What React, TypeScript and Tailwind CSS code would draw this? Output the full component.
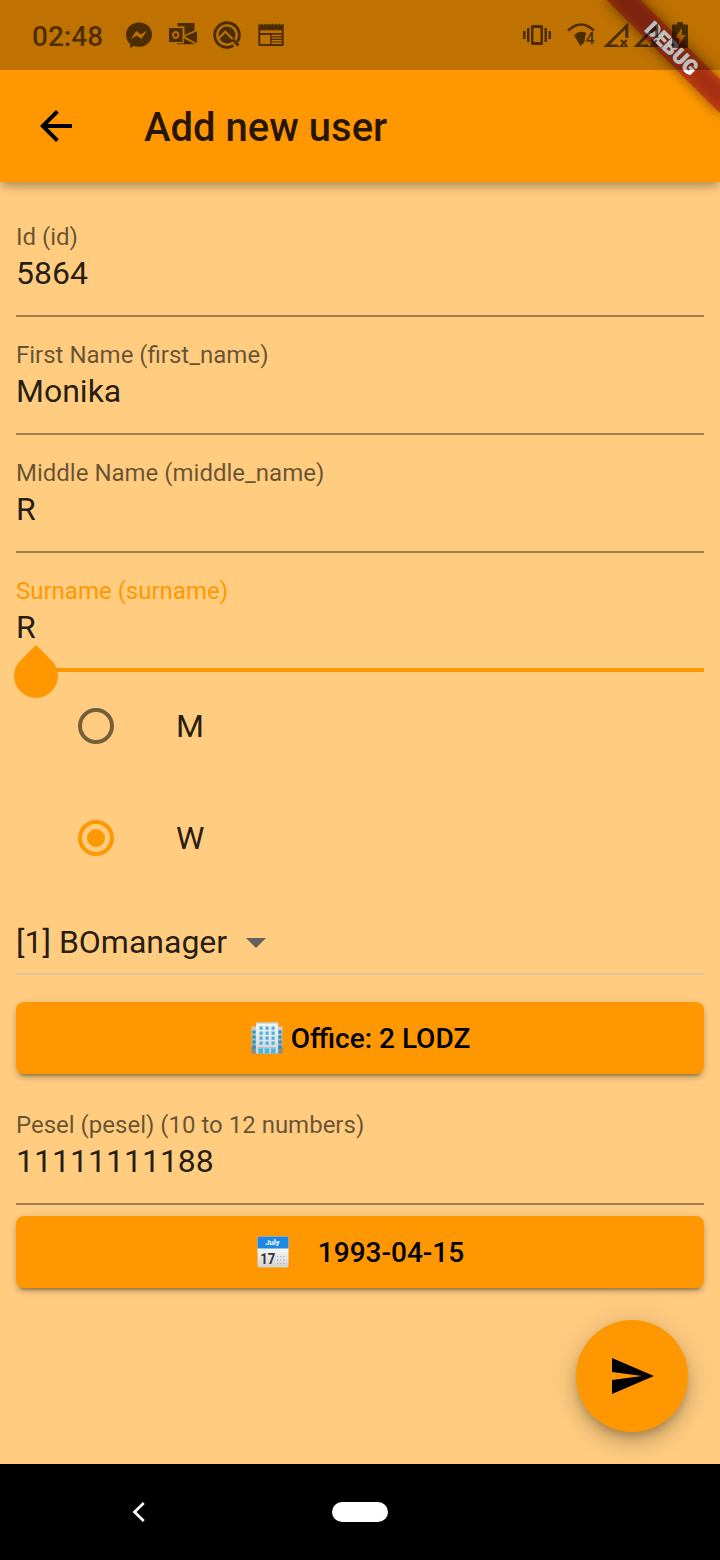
import React from "react";

const INK = "rgba(0,0,0,0.6)";

function StatusIcons() {
  return (
    <div className="flex items-center gap-4">
      <svg width="28" height="28" viewBox="0 0 28 28">
        <path
          fill={INK}
          fillRule="evenodd"
          d="M14 1.4C6.700 1.400 1 6.700 1 13.800c0 3.800 1.600 7 4.200 9.200v4l3.900-2c1.500.5 3.200.8 4.900.8 7.300 0 13-5.300 13-12.400S21.300 1.400 14 1.400zM5.800 18.200l5.500-8.300 4.500 3.600 6.200-3.900-5.600 8.300-4.500-3.500z"
        />
      </svg>
      <svg width="28" height="28" viewBox="0 0 28 28">
        <path
          fill={INK}
          fillRule="evenodd"
          d="M0 7h13.500v14H0zM6.700 10a3.700 4 0 1 0 .01 0zM6.700 12a1.800 2 0 1 1-.01 0z"
        />
        <path fill={INK} d="M8.500 2h17v7.500L15.500 14V5.300h-7zM15.500 15.500l12.500-5.300v12zM8 22.200h6.800v-4.900l10.700 5.500v.4H8z" />
      </svg>
      <svg width="28" height="28" viewBox="0 0 28 28">
        <defs>
          <mask id="peak" maskUnits="userSpaceOnUse" x="0" y="0" width="28" height="28">
            <rect width="28" height="28" fill="#fff" />
            <path d="M4.500 18.500L12.300 10.700L26 24.400" fill="none" stroke="#000" strokeWidth="2" />
          </mask>
        </defs>
        <g mask="url(#peak)">
          <circle cx="14" cy="14" r="8.500" fill={INK} />
        </g>
        <path
          fill="none"
          stroke={INK}
          strokeWidth="2.900"
          d="M24.300 20.800A12.300 12.300 0 1 0 20.500 24.500M19.500 18.500L25.500 24.500"
        />
      </svg>
      <svg width="28" height="28" viewBox="0 0 28 28" fill={INK}>
        <path
          fillRule="evenodd"
          d="M1.300 2.500l1.700 1.500 1.700-1.500L6.500 4l1.800-1.500L10 4l1.800-1.500L13.500 4l1.800-1.500L17 4l1.800-1.500L20.500 4l1.800-1.500L24 4l2.700-1.500V23.500q0 1.500-1.500 1.500H2.800q-1.500 0-1.500-1.500zM3.300 9.200V12h21.400V9.200zM3.300 14v9H13v-9z M14.500 13.800v1.400h10.200v-1.400zM14.500 16.400v1.400h10.200v-1.400zM14.500 19v1.400h10.200V19zM14.500 21.600V23h10.200v-1.400z"
        />
      </svg>
    </div>
  );
}

function Signal() {
  return (
    <svg width="26" height="26" viewBox="0 0 26 26">
      <path fill={INK} fillRule="evenodd" d="M25.300.5V16h-3V7.300L7 22.500h8V25H.3z" />
      <path stroke={INK} strokeWidth="2" d="M18 18l5.700 6M23.700 18L18 24" />
      <path fill={INK} d="M15 24h10v1H15z" />
    </svg>
  );
}

function StatusBar() {
  return (
    <div className="absolute inset-x-0 top-0 flex h-[70px] bg-black/25">
      <div className="ml-8 mt-[4px] flex h-[66px] w-[93px] items-center text-[28px] font-medium text-black/60">
        02:48
      </div>
      <div className="flex h-[70px] items-center">
        <StatusIcons />
      </div>
      <div className="ml-auto mr-[31px] flex h-[70px] items-center">
        <svg width="28" height="22" viewBox="0 0 28 22" fill={INK} className="mr-4">
          <path d="M0 7h2.500v8H0zM4 4h2.500v14H4zM21.500 4H24v14h-2.500zM25.500 7H28v8h-2.500z" />
          <path fillRule="evenodd" d="M9.500 1h9q1.500 0 1.500 1.500v17q0 1.500-1.500 1.500h-9Q8 21 8 19.500v-17Q8 1 9.500 1zM10.500 4v14h7V4z" />
        </svg>
        <svg width="28" height="26" viewBox="0 0 28 26" className="mr-2">
          <path fill="none" stroke={INK} strokeWidth="2.600" d="M1.200 8.500Q14-3.500 26.800 8.500" />
          <path fill={INK} d="M7 13.200Q12.500 7.800 19.500 11L17.800 15v4.500L13.500 24z" />
          <text x="18.500" y="21.500" fontSize="16" fontWeight="500" fill={INK}>
            4
          </text>
        </svg>
        <div className="mr-1">
          <Signal />
        </div>
        <div className="mr-[12px]">
          <Signal />
        </div>
        <svg width="18" height="28" viewBox="0 0 18 28">
          <path fill={INK} fillRule="evenodd" d="M6 1h6v2.500h4q1 0 1 1v21.500q0 1-1 1H2q-1 0-1-1V4.500q0-1 1-1h4zM10.800 7L4 17h3.800v7.500L14.500 14h-3.700z" />
        </svg>
      </div>
    </div>
  );
}

function DebugBanner() {
  return (
    <svg className="absolute right-0 top-0" width="160" height="160" viewBox="0 0 160 160">
      <defs>
        <filter id="banner-shadow" x="-20%" y="-100%" width="140%" height="300%">
          <feGaussianBlur stdDeviation="7" />
        </filter>
      </defs>
      <g transform="translate(160 0) rotate(45)">
        <rect x="-80" y="56" width="160" height="24" fill="#000" fillOpacity="0.5" filter="url(#banner-shadow)" />
        <rect x="-80" y="56" width="160" height="24" fill="#b71c1c" fillOpacity="0.63" />
        <text x="0" y="75.300" textAnchor="middle" fontSize="20.400" fontWeight="900" fill="#fff" stroke="#fff" strokeWidth="0.500">
          DEBUG
        </text>
      </g>
    </svg>
  );
}

type FieldProps = { label: string; value: string; focused?: boolean };

function Field({ label, value, focused = false }: FieldProps) {
  return (
    <div className="relative flex h-[118px] flex-col pt-6">
      <div className={focused ? "h-[28px] text-[24px] leading-[28px] text-[#ff9800]" : "h-[28px] text-[24px] leading-[28px] text-black/60"}>
        {label}
      </div>
      <div className="mt-[3px] h-[38px] text-[32px] leading-[38px] text-black/87">{value}</div>
      {focused ? (
        <>
          <div className="-mb-px mt-auto h-1 bg-[#ff9800]" />
          <svg className="absolute -left-[2px] top-[92px]" width="44" height="53" viewBox="0 0 44 53">
            <path fill="#ff9800" d="M22 0L37.600 15.400A22 22 0 1 1 6.400 15.400z" />
          </svg>
        </>
      ) : (
        <div className="mt-auto h-[2px] bg-black/38" />
      )}
    </div>
  );
}

function RadioRow({ label, checked = false }: { label: string; checked?: boolean }) {
  return (
    <div className="flex h-[112px] items-center pl-[62px]">
      <div
        className={
          checked
            ? "flex size-9 items-center justify-center rounded-full border-4 border-[#ff9800]"
            : "size-9 rounded-full border-4 border-black/54"
        }
      >
        {checked && <div className="size-[18px] rounded-full bg-[#ff9800]" />}
      </div>
      <div className="ml-[62px] text-[32px] leading-[38px] text-black/87">{label}</div>
    </div>
  );
}

function OfficeIcon() {
  const rows = [4, 9, 14, 19];
  return (
    <svg width="32" height="32" viewBox="0 0 32 32">
      <defs>
        <linearGradient id="tower" x1="0" y1="0" x2="0" y2="1">
          <stop offset="0" stopColor="#f5f5f5" />
          <stop offset="1" stopColor="#d2d2d2" />
        </linearGradient>
        <linearGradient id="wing" x1="0" y1="0" x2="0" y2="1">
          <stop offset="0" stopColor="#d0d0d0" />
          <stop offset="1" stopColor="#999" />
        </linearGradient>
      </defs>
      <path fill="url(#wing)" d="M.5 4.500H31.500V31.500H.5z" />
      <path fill="#8a8a8a" d="M.5 25.500h4v6h-4zM27.500 25.500h4v6h-4z" />
      {rows.map((y) => (
        <path key={y} fill="#1695bd" d={`M1.500 ${y + 4.5}h3v3h-3zM27.500 ${y + 4.5}h3v3h-3z`} />
      ))}
      <path fill="url(#tower)" d="M5 .5h22v31H5z" />
      <path fill="#bdbdbd" d="M4.500 .5h23v1h-23zM7 25h18v1.500H7z" />
      {rows.map((y) => (
        <path key={y} fill="#42b3e8" d={`M8.500 ${y + 0.5}h3.200v3.200H8.500zM14.500 ${y + 0.5}h3.200v3.200h-3.200zM20.500 ${y + 0.5}h3.200v3.200h-3.200z`} />
      ))}
      <path fill="#39b7ee" d="M7.500 26.500h4.500v5H7.500zM13.700 26.500h4.500v5h-4.500zM20 26.500h4.500v5H20z" />
    </svg>
  );
}

function CalendarIcon() {
  return (
    <svg width="32" height="32" viewBox="0 0 32 32">
      <defs>
        <linearGradient id="sheet" x1="0" y1="0" x2="0" y2="1">
          <stop offset="0.400" stopColor="#f7f7f7" />
          <stop offset="1" stopColor="#d2d2d2" />
        </linearGradient>
      </defs>
      <rect x="0.500" y="0.500" width="31" height="31" rx="2" fill="url(#sheet)" />
      <path fill="#1e88e5" d="M.5 12.500V2.500q0-2 2-2h27q2 0 2 2v10z" />
      <text x="15.500" y="9.200" textAnchor="middle" fontSize="7.600" fontWeight="700" fill="#fff">
        July
      </text>
      <text x="3.200" y="28.200" fontSize="14" fontWeight="700" fill="#333" textLength="15" lengthAdjust="spacingAndGlyphs">
        17
      </text>
      <path stroke="#aaa" strokeWidth="1.200" strokeDasharray="1.200 1.900" d="M20 20.500h9.500M20 24h9.500M20 27.500h9.500" />
    </svg>
  );
}

const raised =
  "flex h-[72px] w-full shrink-0 items-center justify-center rounded-lg bg-[#ff9800] pl-px text-[28px] font-medium text-black shadow-[0_6px_2px_-4px_rgba(0,0,0,0.2),0_4px_4px_0_rgba(0,0,0,0.14),0_2px_10px_0_rgba(0,0,0,0.12)]";

export default function App() {
  return (
    <div className="relative flex h-[1560px] w-[720px] flex-col overflow-hidden bg-[#ffcc80] font-[Roboto,sans-serif]">
      <header className="relative flex h-[182px] shrink-0 items-center bg-[#ff9800] pt-[70px] shadow-[0_4px_8px_-2px_rgba(0,0,0,0.2),0_6px_10px_0_rgba(0,0,0,0.1),0_2px_16px_0_rgba(0,0,0,0.08)]">
        <button className="ml-8 size-12" aria-label="Back">
          <svg width="48" height="48" viewBox="0 0 24 24">
            <path d="M20 11H7.830l5.590-5.590L12 4l-8 8 8 8 1.410-1.410L7.830 13H20v-2z" />
          </svg>
        </button>
        <h1 className="ml-16 mt-[4px] text-[40px] font-medium leading-[48px] text-black/87">Add new user</h1>
      </header>

      <main className="flex min-h-0 flex-1 flex-col px-4 pt-[17px]">
        <Field label="Id (id)" value="5864" />
        <Field label="First Name (first_name)" value="Monika" />
        <Field label="Middle Name (middle_name)" value="R" />
        <Field label="Surname (surname)" value="R" focused />
        <div className="-mt-px">
          <RadioRow label="M" />
          <RadioRow label="W" checked />
        </div>
        <div className="flex h-[81px] shrink-0 items-center border-b-2 border-[#dfc4a0] pt-[17px]">
          <span className="text-[32px] leading-[38px] text-black/87">[1] BOmanager</span>
          <svg className="ml-[19px] mt-[2px]" width="20" height="10" viewBox="0 0 20 10">
            <path fill="#616161" d="M0 0h20L10 10z" />
          </svg>
        </div>
        <button className={`${raised} mt-[27px]`}>
          <OfficeIcon />
          <span className="ml-2 mt-[2px]">Office: 2 LODZ</span>
        </button>
        <div className="mt-[13px] shrink-0">
          <Field label="Pesel (pesel) (10 to 12 numbers)" value="11111111188" />
        </div>
        <button className={`${raised} mt-[11px]`}>
          <CalendarIcon />
          <span className="ml-[29px] mt-[2px]">1993-04-15</span>
        </button>
        <button
          aria-label="Send"
          className="mr-4 mt-8 flex size-28 shrink-0 items-center justify-center self-end rounded-full bg-[#ff9800] shadow-[0_6px_10px_-2px_rgba(0,0,0,0.2),0_12px_20px_0_rgba(0,0,0,0.14),0_2px_36px_0_rgba(0,0,0,0.12)]"
        >
          <svg width="48" height="48" viewBox="0 0 24 24">
            <path d="M2.010 21L23 12 2.010 3 2 10l15 2-15 2z" />
          </svg>
        </button>
      </main>

      <nav className="relative flex h-24 shrink-0 items-center bg-black">
        <svg className="ml-[132px]" width="14" height="22" viewBox="0 0 14 22">
          <path fill="none" stroke="#fff" strokeWidth="2.800" d="M11.800 2L2.500 11l9.300 9" />
        </svg>
        <div className="ml-[186px] h-5 w-14 rounded-full bg-white" />
      </nav>

      <DebugBanner />
      <StatusBar />
    </div>
  );
}
